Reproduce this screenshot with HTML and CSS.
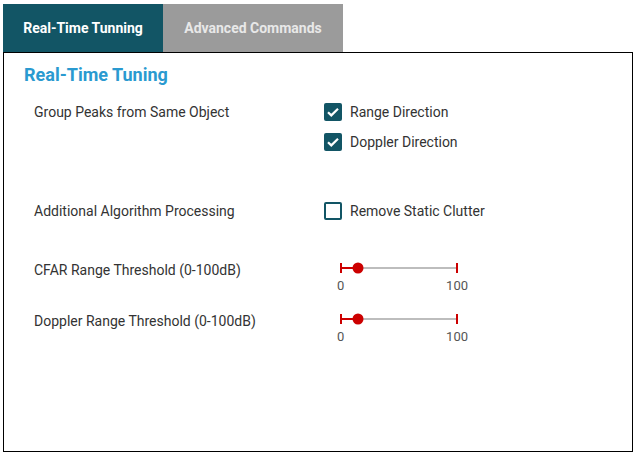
FILE: index.html
```html
<!DOCTYPE html>
<html lang="en">
    <head>
        <meta charset="UTF-8" />
        <meta name="viewport" content="width=device-width, initial-scale=1.0" />
        <title>Real-Time Tuning</title>
        <link rel="stylesheet" href="styles.css">
    </head>
    <body>
        <div class="tabs">
            <div class="tab active">Real-Time Tunning</div>
            <div class="tab">Advanced Commands</div>
        </div>

        <div class="panel">
            <h2 class="title">Real-Time Tuning</h2>

            <div class="row group-row">
                <div class="label">Group Peaks from Same Object</div>
                <div class="controls">
                    <label class="check">
                        <span class="box checked">
                            <svg viewBox="0 0 18 18" width="18" height="18"><path d="M4 9.2l3.3 3.2L14 5.8" fill="none" stroke="#fff" stroke-width="2.2"/></svg>
                        </span>
                        Range Direction
                    </label>
                    <label class="check">
                        <span class="box checked">
                            <svg viewBox="0 0 18 18" width="18" height="18"><path d="M4 9.2l3.3 3.2L14 5.8" fill="none" stroke="#fff" stroke-width="2.2"/></svg>
                        </span>
                        Doppler Direction
                    </label>
                </div>
            </div>

            <div class="row algo-row">
                <div class="label">Additional Algorithm Processing</div>
                <div class="controls">
                    <label class="check">
                        <span class="box"></span>
                        Remove Static Clutter
                    </label>
                </div>
            </div>

            <div class="row cfar-row">
                <div class="label">CFAR Range Threshold (0-100dB)</div>
                <div class="controls">
                    <div class="slider">
                        <svg viewBox="0 0 130 12" width="130" height="12">
                            <line x1="24" y1="6" x2="123" y2="6" stroke="#bdbdbd" stroke-width="2"/>
                            <line x1="7" y1="6" x2="24" y2="6" stroke="#cc0000" stroke-width="2"/>
                            <line x1="7" y1="1" x2="7" y2="11" stroke="#cc0000" stroke-width="2"/>
                            <line x1="123" y1="1" x2="123" y2="11" stroke="#cc0000" stroke-width="2"/>
                            <circle cx="24" cy="6" r="5.5" fill="#cc0000"/>
                        </svg>
                        <div class="ticks"><span>0</span><span>100</span></div>
                    </div>
                </div>
            </div>

            <div class="row doppler-row">
                <div class="label">Doppler Range Threshold (0-100dB)</div>
                <div class="controls">
                    <div class="slider">
                        <svg viewBox="0 0 130 12" width="130" height="12">
                            <line x1="24" y1="6" x2="123" y2="6" stroke="#bdbdbd" stroke-width="2"/>
                            <line x1="7" y1="6" x2="24" y2="6" stroke="#cc0000" stroke-width="2"/>
                            <line x1="7" y1="1" x2="7" y2="11" stroke="#cc0000" stroke-width="2"/>
                            <line x1="123" y1="1" x2="123" y2="11" stroke="#cc0000" stroke-width="2"/>
                            <circle cx="24" cy="6" r="5.5" fill="#cc0000"/>
                        </svg>
                        <div class="ticks"><span>0</span><span>100</span></div>
                    </div>
                </div>
            </div>
        </div>
    </body>
</html>
```

FILE: styles.css
```css
body {
    margin: 0;
    padding: 4px 3px 3px 3px;
    font-family: Roboto, "Liberation Sans", sans-serif;
    background: #fff;
}

.tabs {
    display: flex;
}
.tab {
    height: 48px;
    line-height: 48px;
    text-align: center;
    font-size: 14px;
    font-weight: bold;
    color: #e8e8e8;
    background-color: #9b9b9b;
    width: 180px;
}
.tab.active {
    width: 160px;
    color: #fff;
    background-color: #125565;
}

.panel {
    box-sizing: border-box;
    width: 630px;
    height: 400px;
    border: 1.5px solid #000;
    padding: 11px 0 0 20px;
}

.title {
    margin: 0;
    font-size: 18px;
    line-height: 22px;
    color: #2a9ad0;
}

.row {
    display: flex;
    font-size: 14px;
    color: #333;
}
.label {
    width: 290px;
    padding-left: 10px;
    line-height: 20px;
}
.controls {
    display: flex;
    flex-direction: column;
    gap: 10px;
}

.group-row {
    margin-top: 16px;
}
.algo-row {
    margin-top: 49px;
}
.cfar-row {
    margin-top: 39px;
}
.doppler-row {
    margin-top: 17px;
}

.check {
    display: flex;
    align-items: center;
    gap: 8px;
    line-height: 20px;
    color: #333;
}
.box {
    box-sizing: border-box;
    width: 18px;
    height: 18px;
    border: 2px solid #125565;
    border-radius: 2px;
}
.box.checked {
    border: none;
    background-color: #125565;
}
.box svg {
    display: block;
}

.slider {
    margin-left: 10px;
    padding-top: 2px;
}
.slider svg {
    display: block;
}
.ticks {
    display: flex;
    justify-content: space-between;
    width: 131px;
    margin-top: 4px;
    margin-left: 3px;
    font-size: 13px;
    line-height: 16px;
    color: #555;
}
```
